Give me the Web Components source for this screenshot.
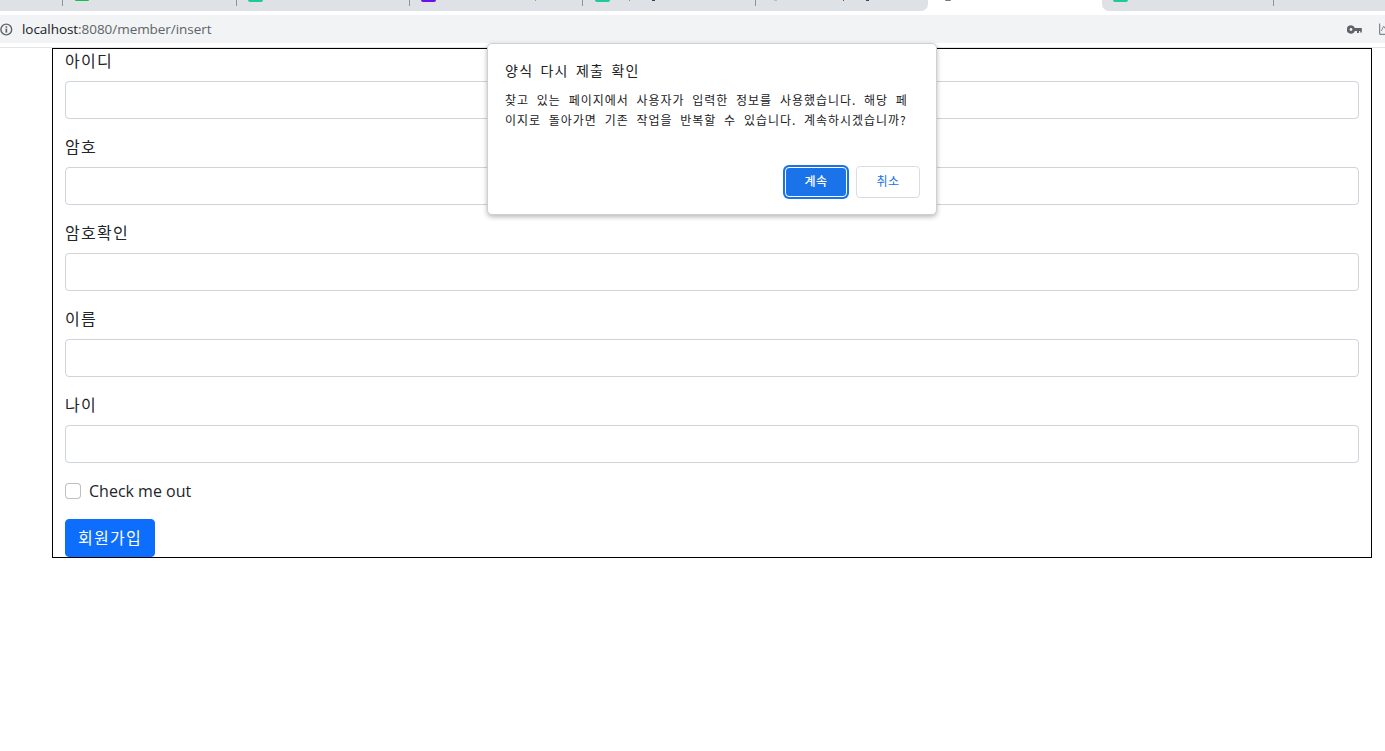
<!DOCTYPE html>
<html lang="ko">
<head>
<meta charset="utf-8">
<title>회원가입</title>
<style>
html,body{margin:0;padding:0;background:#fff}
body{font-family:"Open Sans","Noto Sans CJK KR",sans-serif;font-size:16px;color:#212529;height:751px;overflow:hidden;position:relative}
</style>
</head>
<body>
<browser-chrome url-host="localhost" url-path=":8080/member/insert"></browser-chrome>
<signup-form>
  <form-field label="아이디"></form-field>
  <form-field label="암호"></form-field>
  <form-field label="암호확인"></form-field>
  <form-field label="이름"></form-field>
  <form-field label="나이"></form-field>
  <check-row>Check me out</check-row>
  <primary-button>회원가입</primary-button>
</signup-form>
<resubmit-dialog heading="양식 다시 제출 확인">찾고 있는 페이지에서 사용자가 입력한 정보를 사용했습니다. 해당 페<br>이지로 돌아가면 기존 작업을 반복할 수 있습니다. 계속하시겠습니까?</resubmit-dialog>
<script>
function shadow(el, html){ const r = el.attachShadow({mode:'open'}); r.innerHTML = html; return r; }

class BrowserTab extends HTMLElement{
  connectedCallback(){
    const w = this.getAttribute('w') || '173';
    const ic = this.getAttribute('icon');
    const h = this.getAttribute('ih') || '2';
    const iw = this.getAttribute('iw') || '15';
    const pad = this.getAttribute('pad') || '12';
    const specks = (this.getAttribute('specks')||'').split(';').filter(Boolean).map(s=>{
      const [gap,c,sw]=s.split(',');
      return `<i style="margin-left:${gap}px;background:${c};width:${sw}px"></i>`;
    }).join('');
    shadow(this, `<style>
      :host{display:flex;flex:none;height:11px;width:${w}px;box-sizing:border-box;position:relative;align-items:flex-start;padding-left:${pad}px;background:#dee1e6}
      :host([active]){background:#fff}
      :host([round-r]){border-bottom-right-radius:7px}
      :host([round-l]){border-bottom-left-radius:7px}
      :host([sep])::after{content:"";position:absolute;right:0;top:0;width:1px;height:6px;background:#8f9296}
      b{display:block;flex:none;width:${iw}px;height:${h}px;background:${ic||'transparent'};border-radius:0 0 2px 2px}
      i{display:block;flex:none;height:1px}
    </style><b></b>${specks}`);
  }
}
customElements.define('browser-tab', BrowserTab);

class BrowserChrome extends HTMLElement{
  connectedCallback(){
    shadow(this, `<style>
      :host{display:block;height:48px;box-sizing:border-box;border-bottom:1px solid #e3e4e6;background:#fff;font-family:"Open Sans",sans-serif}
      .tabs{display:flex;height:11px;background:#fff;overflow:hidden}
      .gap{height:4px}
      .bar{display:flex;align-items:center;height:28px;background:#f1f3f4}
      .info{flex:none;display:block}
      .url{margin-left:9px;font-size:13.5px;line-height:28px;color:#5f6368;white-space:nowrap;letter-spacing:-.05px}
      .url b{font-weight:400;color:#202124}
      .spacer{flex:1}
      .key{flex:none;margin-right:17px;display:block}
      .cut{flex:none;display:block}
    </style>
    <div class="tabs">
      <browser-tab w="63" sep></browser-tab>
      <browser-tab w="174" sep icon="#0fc24f" iw="14" ih="1"></browser-tab>
      <browser-tab w="173" sep icon="#20c997" pad="11" ih="2"></browser-tab>
      <browser-tab w="173" sep icon="#6a11e8" pad="11" ih="2" specks="99,#c3914f,1"></browser-tab>
      <browser-tab w="173" sep icon="#20c997" pad="12" ih="2" specks="19,#b08a52,1;22,#33415f,3"></browser-tab>
      <browser-tab w="172" round-r pad="18" iw="0" specks="0,#b9bcc0,3;66,#a13c3c,1;22,#3c4a6a,3"></browser-tab>
      <browser-tab w="174" active icon="#77797c" pad="17" iw="6" ih="1"></browser-tab>
      <browser-tab w="172" sep round-l icon="#20c997" pad="11" ih="2"></browser-tab>
      <browser-tab w="111"></browser-tab>
    </div>
    <div class="gap"></div>
    <div class="bar">
      <svg class="info" width="13" height="13" viewBox="0 0 13 13" fill="none">
        <circle cx="6.3" cy="6.5" r="5.4" stroke="#5f6368" stroke-width="1.4"/>
        <rect x="5.5" y="5.6" width="1.7" height="4" fill="#5f6368"/>
        <rect x="5.5" y="3.2" width="1.7" height="1.5" fill="#5f6368"/>
      </svg>
      <span class="url"><b>${this.getAttribute('url-host')}</b>${this.getAttribute('url-path')}</span>
      <span class="spacer"></span>
      <svg class="key" width="15" height="9" viewBox="0 0 15 9">
        <path fill="#5f6368" d="M4 .3a4.2 4.2 0 1 0 3.9 5.7H10v2h2V6h1.2V7.5H14.8V3H7.9A4.2 4.2 0 0 0 4 .3Zm0 2.8a1.4 1.4 0 1 1 0 2.8 1.4 1.4 0 0 1 0-2.8Z"/>
      </svg>
      <svg class="cut" width="6" height="12" viewBox="0 0 6 12" fill="none">
        <path d="M.7 .5V11.3H6" stroke="#6b6e72" stroke-width="1"/>
        <path d="M2.4 8 4.6 3 6 5.5" stroke="#8b8e92" stroke-width="1"/>
      </svg>
    </div>`);
  }
}
customElements.define('browser-chrome', BrowserChrome);

class SignupForm extends HTMLElement{
  constructor(){ super(); shadow(this, `<style>
    :host{display:block;box-sizing:border-box;width:1320px;height:510px;margin-left:52px;border:1px solid #000;padding:0 12px}
  </style><slot></slot>`); }
}
customElements.define('signup-form', SignupForm);

class FormField extends HTMLElement{
  connectedCallback(){
    shadow(this, `<style>
      :host{display:block;margin-bottom:16px}
      label{display:block;height:24px;line-height:22px;margin-bottom:8px;font-family:"Noto Sans CJK KR",sans-serif;letter-spacing:.08em;color:#212529;font-size:16px}
      input{display:block;box-sizing:border-box;width:100%;height:38px;margin:0;padding:6px 12px;border:1px solid #ced4da;border-radius:4px;background:#fff;font:inherit;outline:0}
    </style><label for="f">${this.getAttribute('label')}</label><input id="f" type="text">`);
  }
}
customElements.define('form-field', FormField);

class CheckRow extends HTMLElement{
  constructor(){ super(); shadow(this, `<style>
    :host{display:flex;align-items:center;height:24px;margin-bottom:16px;font-family:"Open Sans",sans-serif;font-size:16px;color:#212529}
    .box{display:block;box-sizing:border-box;width:16px;height:16px;border:1px solid rgba(0,0,0,.25);border-radius:4px;background:#fff;margin-right:8px;flex:none}
  </style><span class="box"></span><span><slot></slot></span>`); }
}
customElements.define('check-row', CheckRow);

class PrimaryButton extends HTMLElement{
  constructor(){ super(); shadow(this, `<style>
    :host{display:block;width:max-content}
    button{display:block;box-sizing:border-box;height:38px;width:90px;padding:0 0 2px;border:1px solid #0d6efd;border-radius:4px;background:#0d6efd;color:#fff;font-family:"Noto Sans CJK KR",sans-serif;font-size:16px;letter-spacing:.08em;line-height:24px}
  </style><button type="submit"><slot></slot></button>`); }
}
customElements.define('primary-button', PrimaryButton);

class ResubmitDialog extends HTMLElement{
  connectedCallback(){
    shadow(this, `<style>
      :host{position:absolute;left:487px;top:43px;width:450px;height:172px;box-sizing:border-box;background:#fff;border:1px solid #cfd0d2;border-radius:5px;box-shadow:0 2px 5px rgba(0,0,0,.28);padding:16px 16px 16px 17px;font-family:"Noto Sans CJK KR",sans-serif;color:#202124;display:flex;flex-direction:column}
      h2{margin:0 0 10px;padding:0;font-weight:400;font-size:14px;line-height:20px;letter-spacing:.09em;word-spacing:2px;color:#202124}
      p{margin:0;font-size:12px;line-height:20px;letter-spacing:.08em;word-spacing:3.5px;white-space:nowrap;flex:1;color:#202124}
      .actions{display:flex;justify-content:flex-end;gap:8px;margin-bottom:0}
      button{box-sizing:border-box;width:64px;height:32px;border-radius:4px;font-family:inherit;font-size:12px;letter-spacing:.5px;padding:0 0 2px;line-height:16px}
      .ok{background:#1a73e8;color:#fff;border:1px solid #fff;box-shadow:0 0 0 2px #1a73e8;width:62px;height:30px;margin:1px 1px 1px 0;font-weight:500}
      .no{background:#fff;color:#1a73e8;border:1px solid #dadce0}
    </style>
    <h2>${this.getAttribute('heading')}</h2>
    <p><slot></slot></p>
    <div class="actions"><button class="ok" type="button">계속</button><button class="no" type="button">취소</button></div>`);
  }
}
customElements.define('resubmit-dialog', ResubmitDialog);
</script>
</body>
</html>
